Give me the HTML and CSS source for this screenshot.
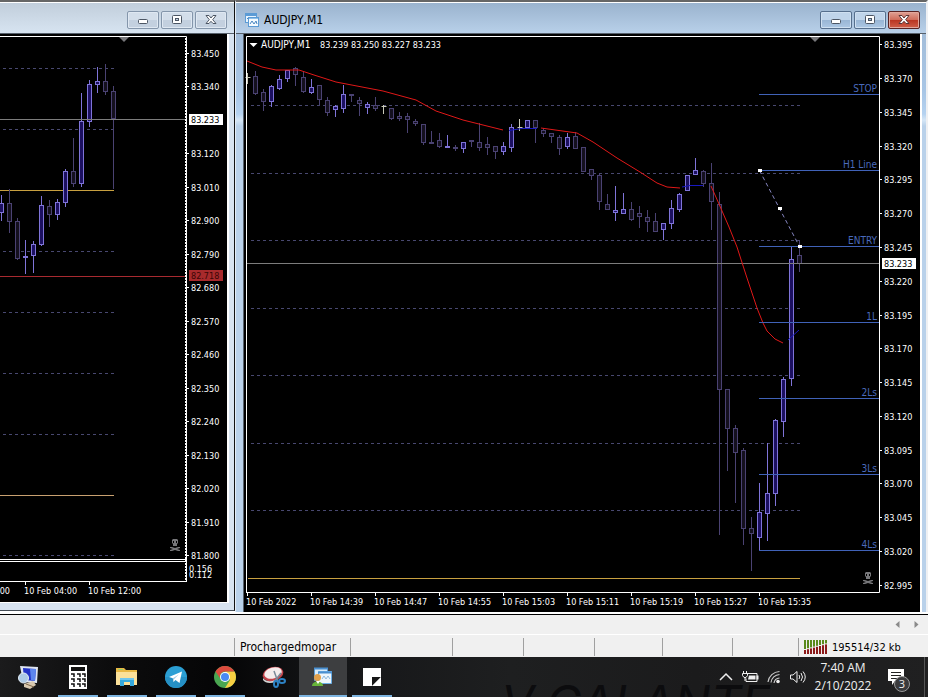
FILE: index.html
```
<!DOCTYPE html>
<html lang="en">
<head>
<meta charset="utf-8">
<title>AUDJPY,M1</title>
<meta name="viewport" content="width=device-width, initial-scale=1">
<link rel="stylesheet" href="styles.css">
</head>
<body>
<main class="workspace">
  <section class="window window-inactive" aria-label="AUDJPY,H1">
    <header class="titlebar">
      <div class="controls">
        <button class="control" aria-label="Minimize"><svg width="12" height="12"><rect x="1.5" y="5.5" width="9" height="4" rx="1" fill="#fff" stroke="#4c5664"/></svg></button>
        <button class="control" aria-label="Maximize"><svg width="12" height="12"><rect x="1.5" y="1.5" width="9" height="8" rx="1" fill="#fff" stroke="#4c5664"/><rect x="4.5" y="4.5" width="3" height="2" fill="#c5d3e2" stroke="#4c5664"/></svg></button>
        <button class="control" aria-label="Close"><svg width="12" height="12"><path d="M1 1.500h3l2 2.500 2-2.500h3L7.700 5.700 11 9.500H8L6 7.300 4 9.500H1L4.300 5.700z" fill="#fff" stroke="#4c5664"/></svg></button>
      </div>
    </header>
    <div class="frame">
      <svg class="chart" id="chart-left" viewBox="0 34 227 568" role="img" aria-label="Hourly candle chart"></svg>
    </div>
  </section>
  <section class="window window-active" aria-label="AUDJPY,M1">
    <header class="titlebar">
      <svg class="title-icon" width="14" height="14"><rect x=".5" y=".5" width="11" height="9" fill="#e9f5ff" stroke="#5b9bd5"/><path d="M1 2h10" stroke="#5b9bd5" stroke-width="2"/><path d="M2 6l2-2 2 2" fill="none" stroke="#4a86c0"/><rect x="3.500" y="4.500" width="10" height="9" fill="#f3faff" stroke="#5b9bd5"/><path d="M4 5.500h9" stroke="#8fc1ea"/><path d="M5 11l2-3 2 3 2-3 1 3" fill="none" stroke="#4a86c0"/></svg>
      <h1 class="title">AUDJPY,M1</h1>
      <div class="controls">
        <button class="control" aria-label="Minimize"><svg width="12" height="12"><rect x="1.500" y="5.500" width="9" height="4" rx="1" fill="#fff" stroke="#4c5664"/></svg></button>
        <button class="control" aria-label="Maximize"><svg width="12" height="12"><rect x="1.500" y="1.500" width="9" height="8" rx="1" fill="#fff" stroke="#4c5664"/><rect x="4.500" y="4.500" width="3" height="2" fill="#a9c4e0" stroke="#4c5664"/></svg></button>
        <button class="control control-close" aria-label="Close"><svg width="12" height="12"><path d="M1 1.500h3l2 2.500 2-2.500h3L7.700 5.700 11 9.500H8L6 7.300 4 9.500H1L4.300 5.700z" fill="#fff" stroke="#5b3535"/></svg></button>
      </div>
    </header>
    <div class="frame">
      <svg class="chart" id="chart-right" viewBox="244 34 676 578" role="img" aria-label="One minute candle chart"></svg>
    </div>
  </section>
</main>

<div class="tabs-strip">
  <button class="scroll" aria-label="Scroll left"><svg width="5" height="7"><path d="M4.500 0v7L.5 3.500z" fill="#8a8a8a"/></svg></button>
  <button class="scroll" aria-label="Scroll right"><svg width="5" height="7"><path d="M.5 0v7l4-3.500z" fill="#8a8a8a"/></svg></button>
</div>

<footer class="statusbar">
  <span class="cell"></span>
  <span class="cell">Prochargedmopar</span>
  <span class="cell"></span><span class="cell"></span><span class="cell"></span><span class="cell"></span><span class="cell"></span><span class="cell"></span>
  <span class="cell cell-traffic">
    <svg width="23" height="14" id="traffic"></svg>
    195514/32 kb
  </span>
</footer>

<nav class="taskbar" aria-label="Taskbar">
  <span class="wallpaper" aria-hidden="true">V·GALANTE</span>
  <div class="apps">
    <button class="app" aria-label="Remote desktop">
      <svg width="24" height="24"><path d="M3 1l18 1-1 16-14-1z" fill="#dfe6f2"/><path d="M6 3l13 1-1 12-11-1z" fill="#2334c8"/><path d="M13 4l6 0-1 12-4-1z" fill="#5d86ee"/><circle cx="6.500" cy="13" r="5" fill="#aecbe6" stroke="#e4edf6"/><path d="M7 19l9-3 3 4-6 4-6-2z" fill="#d8c9b0"/><path d="M9 19l8 3" stroke="#7f674a"/></svg>
    </button>
    <button class="app app-open" aria-label="Calculator">
      <svg width="24" height="24"><path d="M3 0h18v24H3z" fill="#fff"/><path d="M5 2h14v4H5z" fill="#111"/><path d="M5 9h3v3M11 9h3v3M16 9h3v3M5 14h3v3M11 14h3v3M16 14h3v3M5 19h3v3M11 19h3v3M16 19h3v3" fill="none" stroke="#111" stroke-width="1.500"/></svg>
    </button>
    <button class="app app-open" aria-label="File Explorer">
      <svg width="24" height="24"><path d="M1 3h8l2 2h11v5H1z" fill="#e9b844"/><path d="M3 4h5v1H3z" fill="#9acb6a"/><path d="M1 7h21v13H1z" fill="#fbe09a"/><path d="M5 21v-8h14v8h-4v-4H9v4z" fill="#35a9dd"/><path d="M5 13h14v2H5z" fill="#6fc6ee"/></svg>
    </button>
    <button class="app app-open" aria-label="Telegram">
      <svg width="24" height="24"><circle cx="12" cy="12" r="11" fill="#2b9fd4"/><path d="M1 12a11 11 0 0 0 22 0z" fill="#2590c5"/><path d="M5 12l13-5.500-2.500 11.500-4-3-2 2-.7-3.700z" fill="#fff"/><path d="M8.800 13.300l6.200-4-5 5-.5 2.700z" fill="#a9cfe4"/></svg>
    </button>
    <button class="app app-open" aria-label="Chrome">
      <svg width="24" height="24"><circle cx="12" cy="12" r="11" fill="#4aa651"/><path d="M12 6.500h9.500A11 11 0 0 1 12 23l5-8z" fill="#f8cf42"/><path d="M2.500 6.500A11 11 0 0 1 21.500 6.500H12a5.500 5.500 0 0 0-5 3.500v3z" fill="#dd4b3e"/><circle cx="12" cy="12" r="5" fill="#fff"/><circle cx="12" cy="12" r="4" fill="#4a8af4"/></svg>
    </button>
    <button class="app" aria-label="Snipping Tool">
      <svg width="24" height="24"><ellipse cx="11" cy="9" rx="10.500" ry="7" transform="rotate(-15 11 9)" fill="#c3434a"/><ellipse cx="11" cy="8" rx="9" ry="5.500" transform="rotate(-15 11 8)" fill="#f4ecec"/><path d="M1 13c3 4 8 4 12 2v2c-5 2-10 1-12-2z" fill="#d4d4d4"/><path d="M12 6l4 11M19 8l-7 9" stroke="#7b8998" stroke-width="1.500"/><ellipse cx="14" cy="19" rx="2" ry="3" fill="none" stroke="#2d82c4" stroke-width="2"/><ellipse cx="20" cy="16" rx="3" ry="2" fill="none" stroke="#2d82c4" stroke-width="2"/></svg>
    </button>
    <button class="app app-active" aria-label="Trading terminal">
      <svg width="24" height="24"><path d="M3.500 3.500h13v12h-13z" fill="#d9ecfb" stroke="#5b9bd5"/><path d="M7.500 6.500h13v12h-13z" fill="#edf6fd" stroke="#6aaee6"/><path d="M3 3.500h14M7 7.500h14" stroke="#4a8fd0" stroke-width="2"/><path d="M11 14l2-3 2 3 2-3 2 3" fill="none" stroke="#8fb9dd"/><path d="M1 21c0-6 11-6 11 0z" fill="#68b53a"/><path d="M5 16l2 3 2-3z" fill="#fff"/><circle cx="6.500" cy="12.500" r="3.500" fill="#e2a04a"/></svg>
    </button>
    <button class="app app-open" aria-label="Sticky Notes">
      <svg width="24" height="24"><path d="M3 3h18v9l-9 9H3z" fill="#fff"/><path d="M12 12h9l-9 9z" fill="#171717"/><path d="M21 12v9h-9z" fill="#fff"/></svg>
    </button>
  </div>
  <div class="tray">
    <button class="tray-item" aria-label="Show hidden icons"><svg width="14" height="16"><path d="M1 11l6-6 6 6" fill="none" stroke="#eee" stroke-width="1.500"/></svg></button>
    <button class="tray-item" aria-label="Battery"><svg width="18" height="16"><path d="M6 4.500h10v8H5v-3" fill="none" stroke="#eee"/><path d="M8 6.500h6.500v4H7z" fill="#eee"/><path d="M16.500 6.500v4" stroke="#eee" stroke-width="2"/><path d="M2.500 2v3M5.500 2v3M1.500 4.500h5v2L5 8.500H3L1.500 6.500zM4 8v4" fill="none" stroke="#eee"/></svg></button>
    <button class="tray-item" aria-label="Network"><svg width="14" height="16"><g fill="none" stroke="#c9c9c9" stroke-width="1.200"><path d="M1 13A12 12 0 0 1 12.500 2.500"/><path d="M4 13.500a9 9 0 0 1 8.500-8"/><path d="M7 14a6 6 0 0 1 5.500-5"/></g><circle cx="11" cy="12.500" r="1.800" fill="#eee"/></svg></button>
    <button class="tray-item" aria-label="Volume"><svg width="18" height="16"><path d="M1.500 6h2.500l4-3.500v11L4 10H1.500z" fill="none" stroke="#eee"/><path d="M10 6q1.500 2 0 4M12 4q3 4 0 8M14 2.500q4.500 5.500 0 11" fill="none" stroke="#eee"/></svg></button>
    <time class="clock" datetime="2022-02-10T07:40"><span>7:40 AM</span><span>2/10/2022</span></time>
    <button class="notifications" aria-label="3 notifications">
      <svg width="18" height="18"><path d="M1 1h16v12H8l-3 4v-4H1z" fill="#fff"/><path d="M4 4.500h10M4 7.500h10M4 10.500h6" stroke="#222"/></svg>
      <span class="badge">3</span>
    </button>
  </div>
</nav>
<script src="charts.js"></script>
</body>
</html>
```
FILE: styles.css
```
* { box-sizing: border-box; }

body {
  margin: 0;
  min-height: 100vh;
  display: flex;
  flex-direction: column;
  background: #f0f0f0;
  color: #000;
  font-family: "DejaVu Sans Condensed", "DejaVu Sans", sans-serif;
  font-size: 12px;
}

button {
  border: 0;
  padding: 0;
  margin: 0;
  background: none;
  color: inherit;
  font: inherit;
}

svg { display: block; }

/* Chart windows */
.workspace {
  display: grid;
  grid-template-columns: 235fr 693fr;
  align-items: start;
  border-bottom: 1px solid #000;
  padding-bottom: 2px;
  background: #fff;
}

.window { border-top: 2px solid #666; }

.window-inactive {
  border-right: 1px solid #111;
  border-bottom: 1px solid #444c55;
  background: #d7e3f0;
}

.window-active {
  border-left: 1px solid #e4edf6;
  border-right: 2px solid #eef0f3;
  background: linear-gradient(#9fb8d3, #a8c6e6 90px, #b5d2f0 112px, #d5e6f6 118px, #b9d1ea 124px);
}

.titlebar {
  height: 32px;
  display: flex;
  align-items: center;
  border-top: 1px solid #fff;
  border-bottom: 1px solid #56606b;
  padding: 4px 7px 0 0;
}

.window-inactive .titlebar { background: linear-gradient(#c1cedb, #d7e4f1); }

.window-active .titlebar {
  background: linear-gradient(#9ab3ce, #b8d0e9);
  padding-left: 9px;
  padding-right: 6px;
}

.title {
  margin: 0 0 0 5px;
  font-size: 12px;
  font-weight: normal;
  line-height: 16px;
}

.controls {
  display: flex;
  gap: 2px;
  margin-left: auto;
}

.control {
  width: 32px;
  height: 18px;
  display: grid;
  place-items: center;
  border: 1px solid #8496ab;
  border-radius: 2px;
  background: linear-gradient(#d3deea 50%, #c3d0df 50%);
  box-shadow: inset 0 0 0 1px #dfe8f2;
}

.window-active .control {
  border-color: #566f8d;
  background: linear-gradient(#bfd4ea 50%, #98b5d4 50%, #adc8e4);
  box-shadow: inset 0 0 0 1px #cfe0f1;
}

.window-active .control-close {
  border-color: #5a2222;
  background: linear-gradient(#e0a194, #cf6a58 50%, #b93420 50%, #d0604a);
  box-shadow: inset 0 0 0 1px #e2a79c;
}

.window-inactive .frame {
  padding: 0 7px 8px 0;
  background: linear-gradient(#fff, #fff) 0 0 / calc(100% - 5px) calc(100% - 7px) no-repeat;
}

.window-active .frame { padding: 0 4px 0 7px; }

.window-active .chart {
  border-left: 1px solid #59626d;
  border-right: 2px solid #fff;
}

.chart {
  width: 100%;
  height: auto;
  background: #000;
  font-size: 9px;
}

.axis { stroke: #fff; fill: none; }
.axis-dashed { stroke: #fff; stroke-dasharray: 2 1; }
.axis-text { fill: #fff; }
.heading-text { fill: #fff; font-family: "Liberation Sans", sans-serif; }
.symbol-text { font-size: 10px; }
.grid { stroke: #484870; stroke-dasharray: 3 3; }
.bid { stroke: #7c7c7c; }
.gold { stroke: #c8a040; }
.sand { stroke: #c8a070; }
.stop { stroke: #a82a30; }
.level { stroke: #4062b8; }
.level-text { fill: #4a6abc; text-anchor: end; font-size: 10px; }
.price-box { fill: #fff; }
.price-text { fill: #000; }
.stop-box { fill: #a82a2c; }
.stop-text { fill: #3a0606; }
.marker { fill: #77777a; }
.skull { fill: #77777a; }
.up { stroke: #7f74d8; fill: #1c1060; }
.down { stroke: #4a4272; fill: #14101e; }
.doji { stroke: #c8c8b8; fill: none; }
.ma-down { stroke: #e01818; fill: none; }
.ma-up { stroke: #1818c0; fill: none; }
.trend { stroke: #8585c0; stroke-dasharray: 4 3; }
.handle { fill: #fff; }

/* Strip below the windows */
.tabs-strip {
  height: 19px;
  display: flex;
  justify-content: flex-end;
  align-items: center;
  gap: 14px;
  padding-right: 9px;
}

.statusbar {
  height: 23px;
  display: grid;
  grid-template-columns: 234fr 116fr 102fr 71fr 71fr 68fr 70fr 66fr 130fr;
  border-top: 1px solid #fff;
  padding: 3px 0 1px;
}

.cell {
  display: flex;
  align-items: center;
  gap: 5px;
  padding-left: 5px;
  white-space: nowrap;
}

.cell + .cell { border-left: 1px solid #a0a0a0; }

.cell-traffic { font-size: 11px; }

/* Taskbar */
.taskbar {
  position: relative;
  height: 40px;
  flex: none;
  display: flex;
  justify-content: space-between;
  overflow: hidden;
  background: linear-gradient(90deg, #1b1b1c, #0c0c0d 12%, #050506 24%, #151618 36%, #1e1f20 55%, #1b1b1c 75%, #202021);
  color: #f0f0f0;
  font-family: "Open Sans", "Noto Sans", sans-serif;
}

.wallpaper {
  position: absolute;
  left: 54%;
  top: 22px;
  font-family: Inter, sans-serif;
  font-style: italic;
  font-size: 48px;
  line-height: 48px;
  color: #0c0c0e;
}

.apps {
  position: relative;
  display: flex;
  gap: 1px;
  padding-left: 5px;
}

.app {
  width: 48px;
  display: grid;
  place-items: center;
}

.app-open {
  background: linear-gradient(#7db4e0, #7db4e0) center bottom / 40px 2px no-repeat;
}

.app-active {
  background: #3d3e40;
  border-bottom: 2px solid #7db4e0;
  padding-top: 2px;
}

.tray {
  position: relative;
  display: flex;
  align-items: center;
  gap: 8px;
  padding-right: 3px;
}

.tray-item { display: block; }

.clock {
  display: flex;
  flex-direction: column;
  align-items: center;
  width: 56px;
  font-size: 12px;
  line-height: 18px;
  white-space: nowrap;
}

.notifications {
  position: relative;
  align-self: stretch;
  display: flex;
  align-items: center;
  width: 46px;
  padding-left: 8px;
  border-right: 1px solid #555;
}

.badge {
  position: absolute;
  left: 15px;
  top: 19px;
  width: 16px;
  height: 16px;
  border: 1px solid #999;
  border-radius: 50%;
  background: #3a3a3c;
  font-size: 11px;
  line-height: 14px;
  text-align: center;
}
```
FILE: charts.js
```
const NS = 'http://www.w3.org/2000/svg';

function add(parent, tag, cls, attrs, text) {
  const el = document.createElementNS(NS, tag);
  if (cls) el.setAttribute('class', cls);
  for (const key in attrs) el.setAttribute(key, attrs[key]);
  if (text !== undefined) el.textContent = text;
  parent.appendChild(el);
  return el;
}

const line = (svg, cls, x1, y1, x2, y2) => add(svg, 'line', cls, { x1, y1, x2, y2 });
const path = (svg, cls, d) => add(svg, 'path', cls, { d });
const label = (svg, cls, x, y, text) => add(svg, 'text', cls, { x, y }, text);

// Each candle: centre, high, low, body top, body bottom, kind (u, d, or w for a doji)
function candles(svg, rows) {
  for (const [c, high, low, top, bottom, kind] of rows) {
    const x = c + 0.5;
    if (kind === 'w') {
      path(svg, 'doji', `M${x} ${high}V${low}M${x - 2} ${top + 0.5}h5`);
      continue;
    }
    const cls = kind === 'u' ? 'up' : 'down';
    path(svg, cls, `M${x} ${high}V${top}M${x} ${bottom}V${low}`);
    add(svg, 'rect', cls, { x: x - 2, y: top + 0.5, width: 4, height: Math.max(bottom - top - 1, 1) });
  }
}

function skull(svg, x, y) {
  const g = add(svg, 'g', 'skull', { transform: `translate(${x} ${y})` });
  add(g, 'path', '', { 'fill-rule': 'evenodd', d: 'M3 0h4l1 1v3L7 5v2H3V5L2 4V1zM3 2v2h1V2zM6 2v2h1V2z' });
  add(g, 'path', '', { d: 'M0 8h2l3 1 3-1h2v1L7 10l3 1v1H8l-3-1-3 1H0v-1l3-1-3-1z' });
}

function drawLeft() {
  const svg = document.getElementById('chart-left');
  [68, 129, 251, 312, 373, 434, 555].forEach(y => line(svg, 'grid', 3, y + 0.5, 114, y + 0.5));
  line(svg, 'gold', 0, 190.5, 114, 190.5);
  line(svg, 'sand', 0, 495.5, 114, 495.5);
  line(svg, 'stop', 0, 276.5, 186, 276.5);
  candles(svg, [
    [1, 195, 221, 203, 213, 'u'], [9, 189, 233, 203, 222, 'd'], [17, 218, 260, 221, 259, 'd'],
    [25, 240, 274, 256, 258, 'u'], [33, 241, 273, 244, 256, 'u'], [41, 196, 246, 205, 245, 'u'],
    [49, 200, 227, 206, 215, 'd'], [57, 199, 220, 202, 215, 'u'], [65, 169, 207, 171, 203, 'u'],
    [73, 138, 187, 171, 184, 'd'], [81, 93, 187, 121, 184, 'u'], [89, 80, 127, 84, 122, 'u'],
    [97, 67, 93, 81, 85, 'u'], [105, 64, 95, 81, 92, 'd'], [113, 86, 189, 91, 119, 'd']
  ]);
  line(svg, 'bid', 0, 119.5, 186, 119.5);
  path(svg, 'axis', 'M0 36.5H186.5V582M0 559.5H186M0 561.5H186M0 581.5H187M25.5 582v3M89.5 582v3');
  line(svg, 'axis-dashed', 185.5, 38, 185.5, 581);
  path(svg, 'marker', 'M119 37h10l-5 5z');
  const prices = [[53, '83.450'], [86, '83.340'], [153, '83.120'], [187, '83.010'], [220, '82.900'],
    [254, '82.790'], [287, '82.680'], [321, '82.570'], [354, '82.460'], [388, '82.350'], [421, '82.240'],
    [455, '82.130'], [488, '82.020'], [522, '81.910'], [555, '81.800']];
  for (const [y, text] of prices) {
    line(svg, 'axis', 187, y + 0.5, 189, y + 0.5);
    label(svg, 'axis-text', 191, y + 4, text);
  }
  label(svg, 'axis-text', 189, 572, '0.156');
  label(svg, 'axis-text', 189, 578, '0.112');
  add(svg, 'rect', 'price-box', { x: 189, y: 114, width: 34, height: 11 });
  label(svg, 'price-text', 191, 123, '83.233');
  add(svg, 'rect', 'stop-box', { x: 189, y: 270, width: 34, height: 11 });
  label(svg, 'stop-text', 191, 279, '82.718');
  add(svg, 'text', 'axis-text', { x: 10, y: 594, 'text-anchor': 'end' }, '00');
  label(svg, 'axis-text', 24, 594, '10 Feb 04:00');
  label(svg, 'axis-text', 88, 594, '10 Feb 12:00');
  skull(svg, 170, 539);
}

function drawRight() {
  const svg = document.getElementById('chart-right');
  [105, 173, 240, 308, 375, 443, 510].forEach(y => line(svg, 'grid', 251, y + 0.5, 800, y + 0.5));
  line(svg, 'gold', 248, 578.5, 800, 578.5);
  candles(svg, [
    [247, 73, 84, 77, 78, 'w'], [255, 71, 95, 76, 94, 'd'], [263, 89, 111, 92, 102, 'd'],
    [271, 85, 107, 86, 102, 'u'], [279, 75, 90, 79, 89, 'u'], [287, 70, 82, 70, 79, 'u'],
    [295, 67, 86, 68, 75, 'd'], [303, 71, 93, 77, 92, 'd'], [311, 79, 94, 87, 93, 'u'],
    [319, 85, 105, 85, 100, 'd'], [327, 97, 116, 100, 113, 'd'], [335, 105, 117, 106, 110, 'u'],
    [343, 85, 113, 94, 109, 'u'], [351, 94, 102, 94, 96, 'd'], [359, 97, 116, 100, 104, 'd'],
    [367, 102, 114, 104, 108, 'u'], [375, 97, 111, 105, 109, 'd'], [383, 105, 114, 106, 107, 'w'],
    [391, 108, 120, 108, 119, 'd'], [399, 112, 121, 116, 119, 'd'], [407, 113, 133, 116, 120, 'd'],
    [415, 119, 126, 121, 124, 'd'], [423, 124, 145, 124, 143, 'd'], [431, 131, 143, 142, 144, 'd'],
    [439, 133, 148, 140, 147, 'd'], [447, 135, 148, 146, 148, 'u'], [455, 145, 151, 147, 149, 'd'],
    [463, 142, 153, 142, 149, 'u'], [471, 140, 147, 140, 142, 'd'], [479, 123, 151, 142, 148, 'd'],
    [487, 137, 155, 144, 148, 'd'], [495, 146, 159, 146, 152, 'd'], [503, 142, 155, 146, 152, 'u'],
    [511, 124, 152, 127, 148, 'u'], [519, 119, 131, 127, 128, 'w'], [527, 120, 129, 120, 128, 'u'],
    [535, 120, 143, 120, 128, 'd'], [543, 128, 137, 130, 134, 'd'], [551, 133, 143, 133, 137, 'd'],
    [559, 135, 155, 137, 149, 'd'], [567, 133, 149, 137, 147, 'u'], [575, 132, 149, 136, 149, 'd'],
    [583, 147, 172, 147, 172, 'd'], [591, 169, 180, 169, 176, 'd'], [599, 173, 210, 175, 202, 'd'],
    [607, 194, 210, 204, 210, 'd'], [615, 186, 221, 210, 213, 'u'], [623, 193, 214, 209, 214, 'u'],
    [631, 202, 221, 209, 220, 'd'], [639, 206, 228, 213, 217, 'd'], [647, 210, 232, 217, 222, 'd'],
    [655, 213, 232, 221, 232, 'd'], [663, 223, 240, 223, 230, 'u'], [671, 200, 229, 208, 224, 'u'],
    [679, 193, 212, 194, 210, 'u'], [687, 175, 191, 175, 191, 'u'], [695, 158, 175, 170, 175, 'u'],
    [703, 170, 187, 171, 184, 'd'], [711, 163, 230, 183, 202, 'd'], [719, 192, 535, 204, 390, 'd'],
    [727, 389, 471, 389, 429, 'd'], [735, 425, 503, 428, 453, 'd'], [743, 448, 545, 450, 529, 'd'],
    [751, 517, 571, 528, 534, 'd'], [759, 483, 550, 512, 538, 'u'], [767, 443, 541, 493, 514, 'u'],
    [775, 419, 506, 420, 494, 'u'], [783, 377, 437, 379, 422, 'u'], [791, 247, 386, 259, 379, 'u'],
    [799, 240, 272, 255, 264, 'd']
  ]);
  line(svg, 'bid', 247, 263.5, 880, 263.5);
  path(svg, 'ma-down', 'M247 61L262 67L276 70H299L314 75L336 82L383 91L416 100L436 111L463 120L503 130' +
    'M541 128L577 133L593 142L617 158L640 172L657 183L667 187L680 188' +
    'M711 186L719 204L729 227L737 247L747 278L757 308L763 323L767 331L775 339L783 343');
  path(svg, 'ma-up', 'M509 130.500L522 128.500H537M682 187L690 185.500H703M788 340L799 330');
  const levels = [[94, 'STOP'], [170, 'H1 Line'], [246, 'ENTRY'], [322, '1L'], [398, '2Ls'], [474, '3Ls'], [550, '4Ls']];
  for (const [y, text] of levels) {
    line(svg, 'level', 759, y + 0.5, 879, y + 0.5);
    label(svg, 'level-text', 877, y - 2, text);
  }
  line(svg, 'trend', 759.5, 170.5, 799.5, 246.5);
  [[758, 169], [778, 207], [798, 245]].forEach(([x, y]) => add(svg, 'rect', 'handle', { x, y, width: 4, height: 3 }));
  path(svg, 'axis', 'M246.500 592V36.500H879.500V592.500H246');
  path(svg, 'marker', 'M810 37h10l-5 5z');
  path(svg, 'handle', 'M249.500 43h8l-4 4z');
  label(svg, 'axis-text symbol-text', 261, 48, 'AUDJPY,M1');
  label(svg, 'axis-text', 320, 48, '83.239 83.250 83.227 83.233');
  const prices = [[44, '83.395'], [78, '83.370'], [112, '83.345'], [146, '83.320'], [179, '83.295'],
    [213, '83.270'], [247, '83.245'], [281, '83.220'], [315, '83.195'], [348, '83.170'], [382, '83.145'],
    [416, '83.120'], [450, '83.095'], [483, '83.070'], [517, '83.045'], [551, '83.020'], [585, '82.995']];
  for (const [y, text] of prices) {
    line(svg, 'axis', 880, y + 0.5, 882, y + 0.5);
    label(svg, 'axis-text', 884, y + 4, text);
  }
  add(svg, 'rect', 'price-box', { x: 882, y: 258, width: 34, height: 11 });
  label(svg, 'price-text', 884, 267, '83.233');
  ['2022', '14:39', '14:47', '14:55', '15:03', '15:11', '15:19', '15:27', '15:35'].forEach((time, i) => {
    line(svg, 'axis', 247.5 + 64 * i, 593, 247.5 + 64 * i, 596);
    label(svg, 'axis-text', 246 + 64 * i, 605, `10 Feb ${time}`);
  });
  skull(svg, 863, 572);
}

function drawTraffic() {
  const svg = document.getElementById('traffic');
  for (let i = 0; i < 8; i++) {
    const split = 9 - i * 0.8;
    add(svg, 'rect', '', { x: i * 3, y: 0, width: 2, height: split, fill: '#5a8a1c' });
    add(svg, 'rect', '', { x: i * 3, y: split + 1, width: 2, height: 13 - split, fill: '#8c1a1a' });
  }
}

drawLeft();
drawRight();
drawTraffic();
```
